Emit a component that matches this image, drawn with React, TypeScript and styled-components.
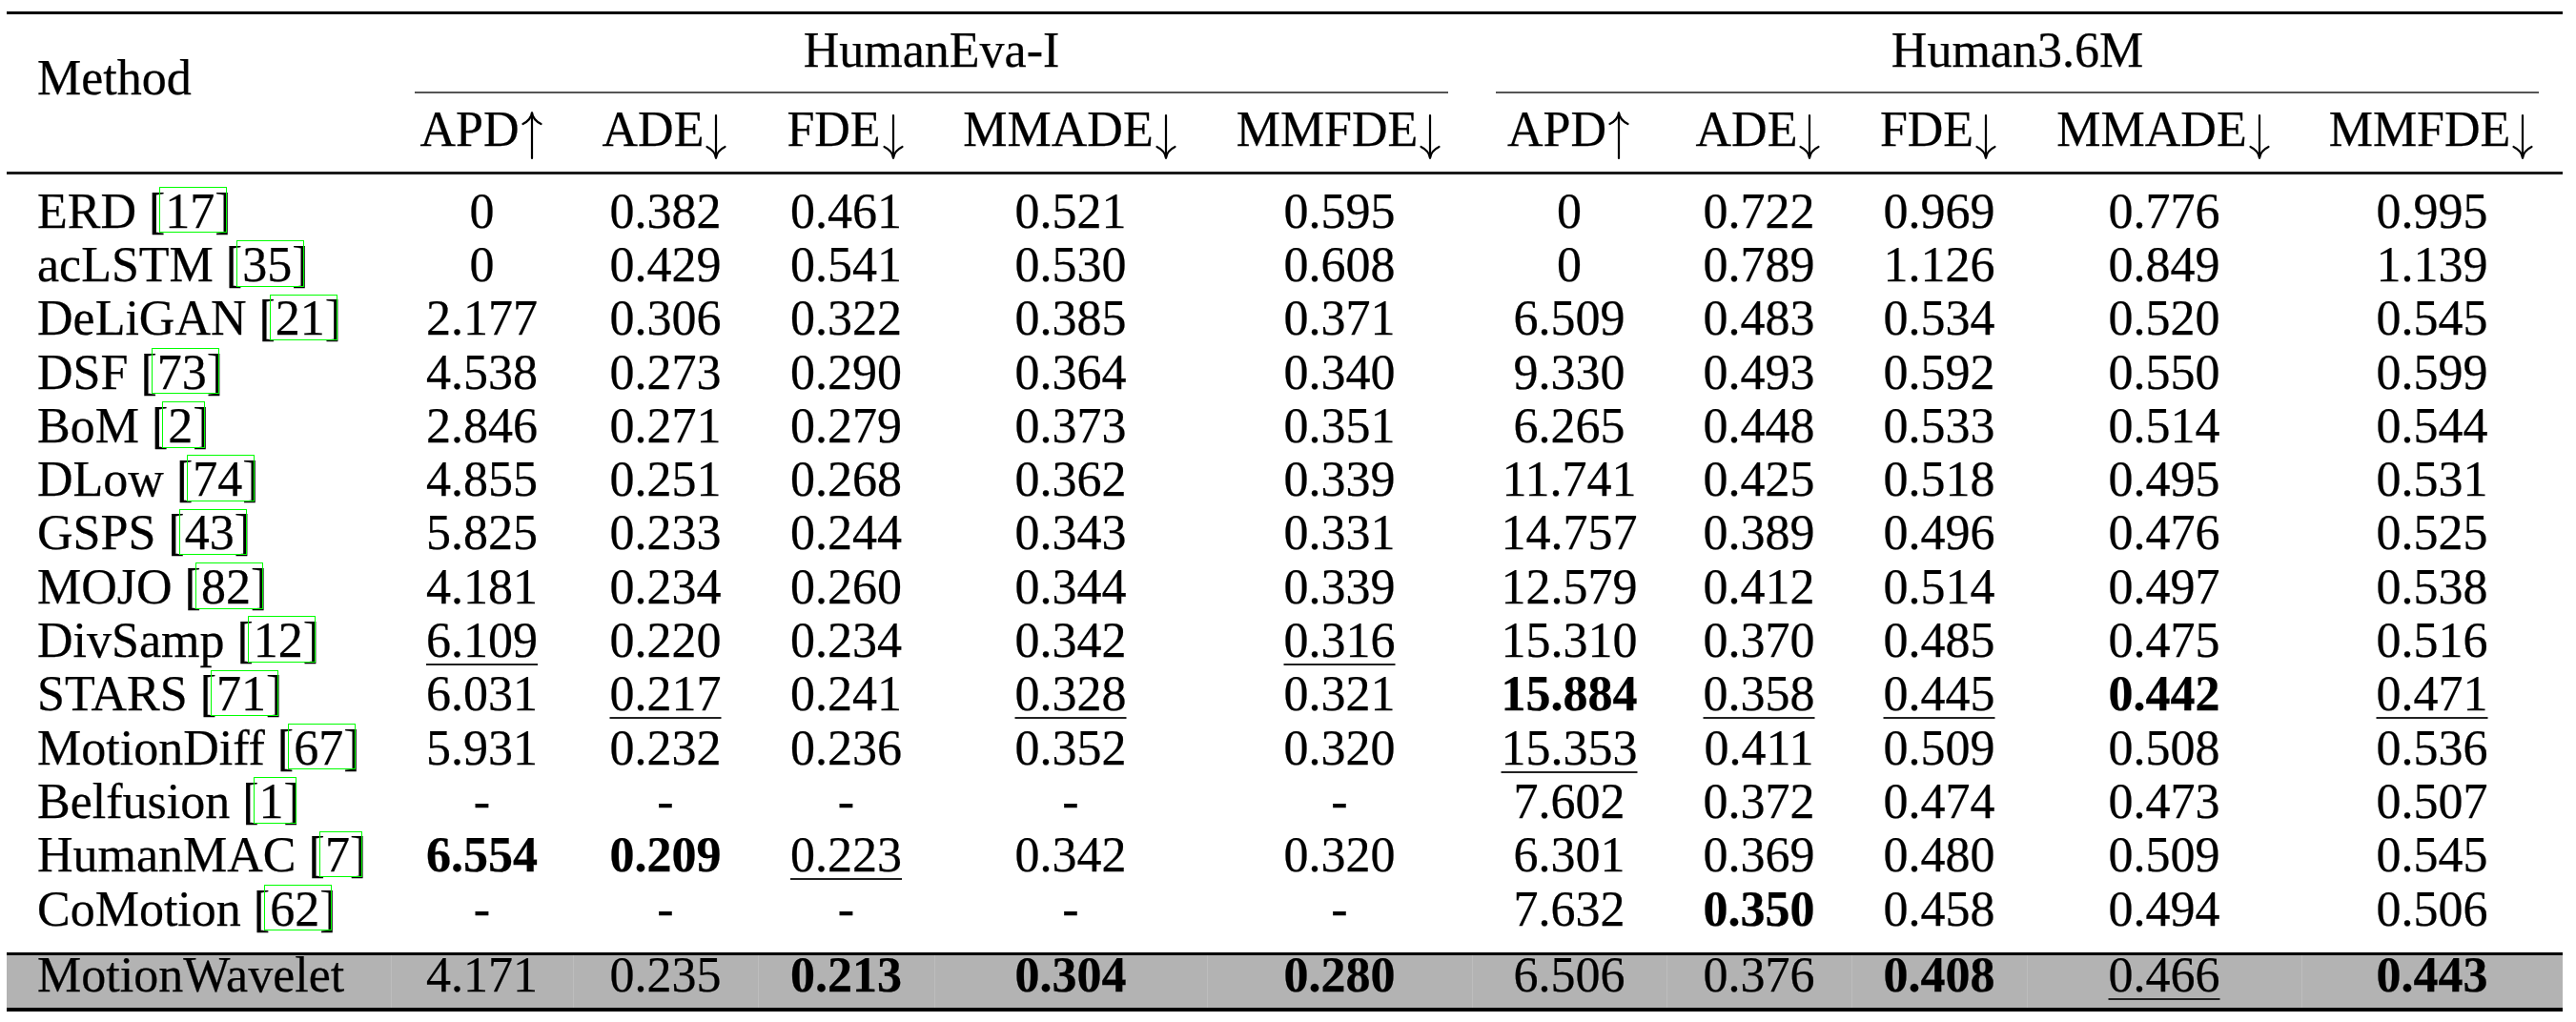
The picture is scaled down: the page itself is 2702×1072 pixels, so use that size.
import React from "react";
import styled, { createGlobalStyle, css } from "styled-components";

const Global = createGlobalStyle`
  html, body {
    margin: 0;
    padding: 0;
    background: #ffffff;
  }
  body {
    font-family: "Liberation Serif", "Times New Roman", serif;
    color: #000000;
    -webkit-font-smoothing: antialiased;
  }
`;

const COLS = [403, 191, 194, 185, 286, 278, 204, 194, 184, 288, 274];

const Page = styled.div`
  padding: 11.5px 14px 12px 7px;
`;

const Grid = styled.div`
  display: grid;
  grid-template-columns: ${COLS.map((c) => `${c}px`).join(" ")};
  width: ${COLS.reduce((a, b) => a + b, 0)}px;
  font-size: 52px;
  white-space: nowrap;
  -webkit-text-stroke: 0.25px #000;
`;

const Rule = styled.div<{ $thick: number; $above?: number; $below?: number; $tone?: string }>`
  grid-column: 1 / -1;
  height: ${(p) => p.$thick}px;
  margin-top: ${(p) => p.$above ?? 0}px;
  margin-bottom: ${(p) => p.$below ?? 0}px;
  background: ${(p) => p.$tone ?? "#000"};
`;

const MethodHead = styled.div`
  grid-row: span 2;
  padding: 37.7px 0 0 32px;
  line-height: 57.6px;
`;

const GroupHead = styled.div`
  grid-column: span 5;
  padding-top: 8.7px;
`;

const GroupTitle = styled.div`
  margin: 0 25px;
  padding-bottom: 14.7px;
  line-height: 57.6px;
  text-align: center;
  border-bottom: 2px solid #555;
`;

const MetricHead = styled.div`
  padding: 8.7px 0 13.7px;
  line-height: 57.6px;
  text-align: center;
`;

const ArrowSvg = styled.svg`
  display: inline-block;
  width: 26px;
  height: 50px;
  vertical-align: -14px;
  overflow: visible;
`;

const Arrow = ({ dir }: { dir: "up" | "down" }) =>
  dir === "up" ? (
    <ArrowSvg viewBox="0 0 26 50" aria-label="↑">
      <g fill="none" stroke="#000" strokeWidth="2.2" strokeLinecap="round">
        <path d="M13 1.5 L13 49" />
        <path d="M13 1.5 C13.6 5.5 16.5 10 22.5 13" />
        <path d="M13 1.5 C12.4 5.5 9.5 10 3.5 13" />
      </g>
    </ArrowSvg>
  ) : (
    <ArrowSvg viewBox="0 0 26 50" aria-label="↓">
      <g fill="none" stroke="#000" strokeWidth="2.2" strokeLinecap="round">
        <path d="M13 4 L13 48.5" />
        <path d="M13 48.5 C13.6 44.5 16.5 40 22.5 37" />
        <path d="M13 48.5 C12.4 44.5 9.5 40 3.5 37" />
      </g>
    </ArrowSvg>
  );

const rowTone = (shade?: boolean) =>
  shade
    ? css`
        height: 55px;
        box-sizing: border-box;
        line-height: 42.9px;
        padding-bottom: 12.1px;
        background: #b3b3b3;
      `
    : css`
        height: 56.3px;
        line-height: 56.3px;
      `;

const NameCell = styled.div<{ $shade?: boolean }>`
  ${(p) => rowTone(p.$shade)}
  padding-left: 32px;
`;

const NumCell = styled.div<{ $shade?: boolean }>`
  ${(p) => rowTone(p.$shade)}
  text-align: center;
  ${(p) =>
    p.$shade &&
    css`
      box-shadow: inset 1px 0 0 #bdbdbd;
    `}
`;

const Cite = styled.span`
  position: relative;
  &::after {
    content: "";
    position: absolute;
    left: -6px;
    right: -13px;
    top: 3.3px;
    bottom: 5.2px;
    border: 1px solid #00ff00;
    pointer-events: none;
  }
`;

const Bold = styled.b`
  font-weight: 700;
`;

const Under = styled.span`
  text-decoration: underline;
  text-decoration-thickness: 2px;
  text-underline-offset: 7px;
  text-decoration-color: #222;
`;

type Row = { name: string; cite?: string; he: string[]; h36: string[]; shade?: boolean };

const DASH = ["-", "-", "-", "-", "-"];

const ROWS: Row[] = [
  { name: "ERD", cite: "17", he: ["0", "0.382", "0.461", "0.521", "0.595"], h36: ["0", "0.722", "0.969", "0.776", "0.995"] },
  { name: "acLSTM", cite: "35", he: ["0", "0.429", "0.541", "0.530", "0.608"], h36: ["0", "0.789", "1.126", "0.849", "1.139"] },
  { name: "DeLiGAN", cite: "21", he: ["2.177", "0.306", "0.322", "0.385", "0.371"], h36: ["6.509", "0.483", "0.534", "0.520", "0.545"] },
  { name: "DSF", cite: "73", he: ["4.538", "0.273", "0.290", "0.364", "0.340"], h36: ["9.330", "0.493", "0.592", "0.550", "0.599"] },
  { name: "BoM", cite: "2", he: ["2.846", "0.271", "0.279", "0.373", "0.351"], h36: ["6.265", "0.448", "0.533", "0.514", "0.544"] },
  { name: "DLow", cite: "74", he: ["4.855", "0.251", "0.268", "0.362", "0.339"], h36: ["11.741", "0.425", "0.518", "0.495", "0.531"] },
  { name: "GSPS", cite: "43", he: ["5.825", "0.233", "0.244", "0.343", "0.331"], h36: ["14.757", "0.389", "0.496", "0.476", "0.525"] },
  { name: "MOJO", cite: "82", he: ["4.181", "0.234", "0.260", "0.344", "0.339"], h36: ["12.579", "0.412", "0.514", "0.497", "0.538"] },
  { name: "DivSamp", cite: "12", he: ["u:6.109", "0.220", "0.234", "0.342", "u:0.316"], h36: ["15.310", "0.370", "0.485", "0.475", "0.516"] },
  { name: "STARS", cite: "71", he: ["6.031", "u:0.217", "0.241", "u:0.328", "0.321"], h36: ["b:15.884", "u:0.358", "u:0.445", "b:0.442", "u:0.471"] },
  { name: "MotionDiff", cite: "67", he: ["5.931", "0.232", "0.236", "0.352", "0.320"], h36: ["u:15.353", "0.411", "0.509", "0.508", "0.536"] },
  { name: "Belfusion", cite: "1", he: DASH, h36: ["7.602", "0.372", "0.474", "0.473", "0.507"] },
  { name: "HumanMAC", cite: "7", he: ["b:6.554", "b:0.209", "u:0.223", "0.342", "0.320"], h36: ["6.301", "0.369", "0.480", "0.509", "0.545"] },
  { name: "CoMotion", cite: "62", he: DASH, h36: ["7.632", "b:0.350", "0.458", "0.494", "0.506"] },
];

const OURS: Row = {
  name: "MotionWavelet",
  he: ["4.171", "0.235", "b:0.213", "b:0.304", "b:0.280"],
  h36: ["6.506", "0.376", "b:0.408", "u:0.466", "b:0.443"],
  shade: true,
};

const METRICS: [string, "up" | "down"][] = [
  ["APD", "up"],
  ["ADE", "down"],
  ["FDE", "down"],
  ["MMADE", "down"],
  ["MMFDE", "down"],
];

const Value = ({ v }: { v: string }) => {
  if (v.startsWith("b:")) return <Bold>{v.slice(2)}</Bold>;
  if (v.startsWith("u:")) return <Under>{v.slice(2)}</Under>;
  return <>{v}</>;
};

const BodyRow = ({ row }: { row: Row }) => (
  <>
    <NameCell $shade={row.shade}>
      {row.name}
      {row.cite && (
        <>
          {" ["}
          <Cite>{row.cite}</Cite>
          {"]"}
        </>
      )}
    </NameCell>
    {[...row.he, ...row.h36].map((v, i) => (
      <NumCell key={i} $shade={row.shade}>
        <Value v={v} />
      </NumCell>
    ))}
  </>
);

export default function App() {
  return (
    <>
      <Global />
      <Page>
        <Grid>
          <Rule $thick={3.5} />
          <MethodHead>Method</MethodHead>
          <GroupHead>
            <GroupTitle>HumanEva-I</GroupTitle>
          </GroupHead>
          <GroupHead>
            <GroupTitle>Human3.6M</GroupTitle>
          </GroupHead>
          {[...METRICS, ...METRICS].map(([m, a], i) => (
            <MetricHead key={i}>
              {m}
              <Arrow dir={a} />
            </MetricHead>
          ))}
          <Rule $thick={3} $below={10.3} $tone="#1a1a1a" />
          {ROWS.map((r) => (
            <BodyRow key={r.name} row={r} />
          ))}
          <Rule $thick={3.5} $above={17} />
          <BodyRow row={OURS} />
          <Rule $thick={3.5} />
        </Grid>
      </Page>
    </>
  );
}
